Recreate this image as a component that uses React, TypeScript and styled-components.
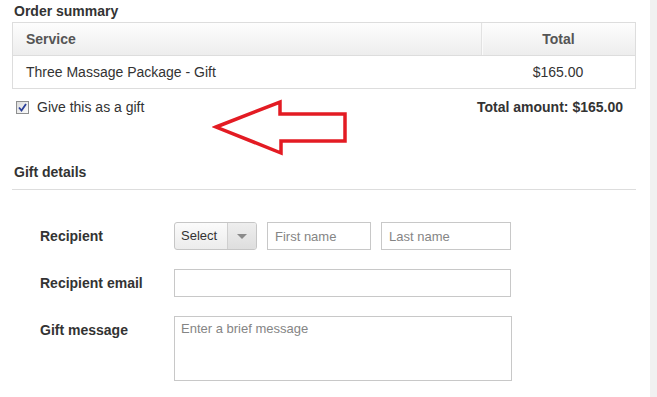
import React from 'react';
import styled, { createGlobalStyle } from 'styled-components';

const GlobalStyle = createGlobalStyle`
  html, body { margin: 0; padding: 0; background: #fff; }
  body {
    font-family: "Liberation Sans", Arial, sans-serif;
    color: #333;
    font-size: 14px;
  }
  * { box-sizing: border-box; }
`;

const Page = styled.div`
  position: relative;
  display: flex;
  width: 657px;
  height: 397px;
  overflow: hidden;
`;

const Main = styled.main`
  width: 650px;
  padding: 1px 14px 0 12px;
`;

const SideStrip = styled.div`
  width: 7px;
  background: #f1f1f1;
`;

const SectionTitle = styled.h2`
  margin: 0 0 1px;
  padding-left: 2px;
  font-size: 14px;
  font-weight: bold;
  line-height: 20px;
  color: #333;
`;

const SummaryTable = styled.div`
  border: 1px solid #ddd;
`;

const Row = styled.div<{ $header?: boolean }>`
  display: grid;
  grid-template-columns: 1fr 154px;
  height: ${(p) => (p.$header ? '33px' : '32px')};
  border-bottom: ${(p) => (p.$header ? '1px solid #ddd' : 'none')};
  background: ${(p) => (p.$header ? 'linear-gradient(#fdfdfd, #ededed)' : '#fff')};
`;

const Cell = styled.div<{ $header?: boolean; $center?: boolean; $divider?: boolean }>`
  display: flex;
  align-items: center;
  justify-content: ${(p) => (p.$center ? 'center' : 'flex-start')};
  padding-left: ${(p) => (p.$center ? '0' : '13px')};
  font-weight: ${(p) => (p.$header ? 'bold' : 'normal')};
  color: ${(p) => (p.$header ? '#555' : '#333')};
  border-left: ${(p) => (p.$divider ? '1px solid #e2e2e2' : 'none')};
  box-shadow: ${(p) => (p.$divider ? 'inset 1px 0 0 #fafafa' : 'none')};
`;

const GiftRow = styled.div`
  display: flex;
  align-items: center;
  justify-content: space-between;
  height: 20px;
  margin-top: 8px;
  padding: 0 13px 0 4px;
`;

const CheckLabel = styled.label`
  display: flex;
  align-items: center;
  gap: 8px;
  color: #333;
`;

const CheckBox = styled.span`
  display: inline-flex;
  align-items: center;
  justify-content: center;
  width: 13px;
  height: 13px;
  border: 1px solid #8e8f8f;
  background: linear-gradient(135deg, #dcdcdc, #fbfbfb);
`;

const TotalAmount = styled.div`
  font-weight: bold;
  color: #333;
`;

const GiftHeader = styled.div`
  margin-top: 45px;
  padding-bottom: 6px;
  border-bottom: 1px solid #ddd;
`;

const Form = styled.div`
  display: flex;
  flex-direction: column;
  gap: 19px;
  margin-top: 32px;
  padding-left: 28px;
`;

const FormRow = styled.div`
  display: grid;
  grid-template-columns: 134px auto;
  align-items: start;
`;

const FieldLabel = styled.div`
  font-weight: bold;
  line-height: 28px;
  color: #333;
`;

const Controls = styled.div`
  display: flex;
  gap: 10px;
`;

const SelectButton = styled.div`
  display: flex;
  width: 83px;
  height: 28px;
  border: 1px solid #c6c6c6;
  border-radius: 3px;
  overflow: hidden;
  background: linear-gradient(#fbfbfb, #ececec);
`;

const SelectText = styled.span`
  width: 52px;
  padding-left: 6px;
  font-size: 13px;
  line-height: 26px;
  color: #333;
`;

const SelectCaret = styled.span`
  flex: 1;
  display: flex;
  align-items: center;
  justify-content: center;
  border-left: 1px solid #cfcfcf;
  background: linear-gradient(#eeeeee, #dedede);
`;

const Caret = styled.span`
  width: 0;
  height: 0;
  border-left: 5px solid transparent;
  border-right: 5px solid transparent;
  border-top: 5px solid #8a8a8a;
`;

const TextInput = styled.input<{ $w: number }>`
  width: ${(p) => p.$w}px;
  height: 28px;
  margin: 0;
  padding: 0 7px;
  border: 1px solid #c8c8c8;
  font-family: "Liberation Sans", Arial, sans-serif;
  font-size: 13px;
  color: #333;
  outline: none;
  &::placeholder { color: #858585; }
`;

const MessageBox = styled.textarea`
  display: block;
  width: 338px;
  height: 65px;
  margin: 0;
  padding: 4px 6px;
  border: 1px solid #c8c8c8;
  font-family: "Liberation Sans", Arial, sans-serif;
  font-size: 13px;
  line-height: 16px;
  resize: none;
  outline: none;
  &::placeholder { color: #858585; }
`;

const ArrowOverlay = styled.svg`
  position: absolute;
  left: 212px;
  top: 98px;
  width: 138px;
  height: 58px;
  pointer-events: none;
`;

export default function App() {
  return (
    <>
      <GlobalStyle />
      <Page>
        <Main>
          <SectionTitle>Order summary</SectionTitle>
          <SummaryTable>
            <Row $header>
              <Cell $header>Service</Cell>
              <Cell $header $center $divider>Total</Cell>
            </Row>
            <Row>
              <Cell>Three Massage Package - Gift</Cell>
              <Cell $center>$165.00</Cell>
            </Row>
          </SummaryTable>
          <GiftRow>
            <CheckLabel>
              <CheckBox>
                <svg width="9" height="9" viewBox="0 0 9 9">
                  <path d="M1 4.5 L3.5 7.5 L8 1" fill="none" stroke="#2b3f99" strokeWidth="1.8" />
                </svg>
              </CheckBox>
              Give this as a gift
            </CheckLabel>
            <TotalAmount>Total amount: $165.00</TotalAmount>
          </GiftRow>
          <GiftHeader>
            <SectionTitle>Gift details</SectionTitle>
          </GiftHeader>
          <Form>
            <FormRow>
              <FieldLabel>Recipient</FieldLabel>
              <Controls>
                <SelectButton>
                  <SelectText>Select</SelectText>
                  <SelectCaret>
                    <Caret />
                  </SelectCaret>
                </SelectButton>
                <TextInput $w={104} placeholder="First name" />
                <TextInput $w={130} placeholder="Last name" />
              </Controls>
            </FormRow>
            <FormRow>
              <FieldLabel>Recipient email</FieldLabel>
              <Controls>
                <TextInput $w={337} />
              </Controls>
            </FormRow>
            <FormRow>
              <FieldLabel>Gift message</FieldLabel>
              <Controls>
                <MessageBox placeholder="Enter a brief message" />
              </Controls>
            </FormRow>
          </Form>
        </Main>
        <SideStrip />
        <ArrowOverlay viewBox="0 0 138 58">
          <polygon
            points="4,29 68,4 68,16 133,16 133,43 69,43 69,55"
            fill="none"
            stroke="#e31b23"
            strokeWidth="3.5"
            strokeLinejoin="miter"
          />
        </ArrowOverlay>
      </Page>
    </>
  );
}
